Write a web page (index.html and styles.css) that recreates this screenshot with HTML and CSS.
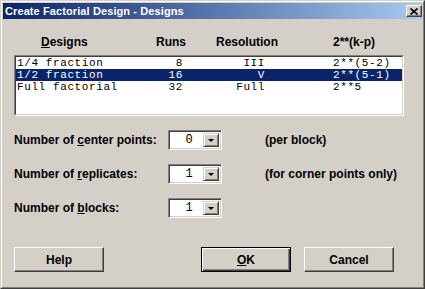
FILE: index.html
```html
<!DOCTYPE html>
<html lang="en">
<head>
    <meta charset="UTF-8">
    <title>Create Factorial Design - Designs</title>
    <link rel="stylesheet" href="styles.css">
</head>
<body>
    <div class="window">
        <div class="frame">
            <div class="titlebar">
                <span class="title">Create Factorial Design - Designs</span>
                <span class="close">
                    <svg width="8" height="7" viewBox="0 0 8 7"><path d="M0.5 0.5 L7.5 6.5 M7.5 0.5 L0.5 6.5" stroke="#000" stroke-width="1.6"/></svg>
                </span>
            </div>
            <div class="content">
                <div class="cols heads">
                    <span class="h-name"><u>D</u>esigns</span>
                    <span class="h-runs">Runs</span>
                    <span class="h-res">Resolution</span>
                    <span class="h-gen">2**(k-p)</span>
                </div>
                <div class="listbox">
                    <div class="list-inner">
                        <div class="cols row">
                            <span>1/4 fraction</span><span class="num">8</span><span class="num">III</span><span class="gen">2**(5-2)</span>
                        </div>
                        <div class="cols row selected">
                            <span>1/2 fraction</span><span class="num">16</span><span class="num">V</span><span class="gen">2**(5-1)</span>
                        </div>
                        <div class="cols row">
                            <span>Full factorial</span><span class="num">32</span><span class="num">Full</span><span class="gen">2**5</span>
                        </div>
                    </div>
                </div>

                <div class="field">
                    <span class="label">Number of <u>c</u>enter points:</span>
                    <div class="combo"><span class="value">0</span><span class="drop"></span></div>
                    <span class="note">(per block)</span>
                </div>
                <div class="field">
                    <span class="label">Number of <u>r</u>eplicates:</span>
                    <div class="combo"><span class="value">1</span><span class="drop"></span></div>
                    <span class="note">(for corner points only)</span>
                </div>
                <div class="field">
                    <span class="label">Number of <u>b</u>locks:</span>
                    <div class="combo"><span class="value">1</span><span class="drop"></span></div>
                </div>

                <div class="buttons">
                    <button class="btn">Help</button>
                    <span class="spacer"></span>
                    <button class="btn default"><u>O</u>K</button>
                    <button class="btn">Cancel</button>
                </div>
            </div>
        </div>
    </div>
</body>
</html>
```

FILE: styles.css
```css
body {
    margin: 0;
    background: #d4d0c8;
    font-family: "Liberation Sans", Arial, sans-serif;
    font-weight: bold;
    font-size: 12px;
    color: #000;
}

.window {
    width: 425px;
    height: 289px;
    box-sizing: border-box;
    border: 1px solid;
    border-color: #d4d0c8 #404040 #404040 #d4d0c8;
}

.frame {
    height: 100%;
    box-sizing: border-box;
    border: 1px solid;
    border-color: #fff #808080 #808080 #fff;
    padding: 1px;
    display: flex;
    flex-direction: column;
}

.titlebar {
    height: 16px;
    background: linear-gradient(to right, #0a246a, #a6caf0);
    display: flex;
    align-items: center;
    justify-content: space-between;
    padding-left: 2px;
}

.title {
    color: #fff;
    font-size: 11px;
    font-family: "Liberation Sans", Arial, sans-serif;
    letter-spacing: 0.1px;
}

.close {
    width: 16px;
    height: 12px;
    box-sizing: border-box;
    background: #d4d0c8;
    border: 1px solid;
    border-color: #fff #404040 #404040 #fff;
    box-shadow: inset -1px -1px 0 #808080;
    display: flex;
    align-items: center;
    justify-content: center;
}

.close svg {
    display: block;
}

.content {
    padding: 16px 18px 14px 11px;
    display: flex;
    flex-direction: column;
}

.cols {
    display: grid;
    grid-template-columns: 139px 27px 82px 1fr;
}

.heads {
    line-height: 14px;
    padding-left: 3px;
}

.h-name {
    padding-left: 24px;
}

.h-runs {
    text-align: right;
}

.h-res {
    padding-left: 33px;
}

.h-gen {
    padding-left: 68px;
}

.listbox {
    margin-top: 6px;
    height: 61px;
    box-sizing: border-box;
    border: 1px solid;
    border-color: #808080 #fff #fff #808080;
}

.list-inner {
    height: 100%;
    box-sizing: border-box;
    border: 1px solid;
    border-color: #404040 #d4d0c8 #d4d0c8 #404040;
    background: #fff;
}

.row {
    font-family: "Liberation Mono", "Courier New", monospace;
    font-weight: normal;
    font-size: 11px;
    letter-spacing: 0.6px;
    line-height: 12px;
    padding-left: 1px;
    height: 12px;
}

.row .num {
    text-align: right;
}

.row .gen {
    padding-left: 68px;
}

.selected {
    background: #0a246a;
    color: #fff;
}

.field {
    display: flex;
    align-items: center;
    height: 20px;
    margin-top: 14px;
}

.field .label {
    width: 154px;
}

.combo {
    width: 54px;
    height: 20px;
    box-sizing: border-box;
    border: 1px solid;
    border-color: #808080 #fff #fff #808080;
    box-shadow: inset 1px 1px 0 #404040, inset -1px -1px 0 #d4d0c8;
    background: #fff;
    display: flex;
    padding: 2px;
}

.combo .value {
    flex: 1;
    font-family: "Liberation Mono", "Courier New", monospace;
    font-weight: normal;
    font-size: 12px;
    line-height: 14px;
    text-align: center;
    padding-left: 4px;
}

.drop {
    width: 16px;
    box-sizing: border-box;
    background: #d4d0c8;
    border: 1px solid;
    border-color: #d4d0c8 #404040 #404040 #d4d0c8;
    box-shadow: inset 1px 1px 0 #fff, inset -1px -1px 0 #808080;
    position: relative;
}

.drop::after {
    content: "";
    position: absolute;
    left: 4px;
    top: 5px;
    border-left: 3px solid transparent;
    border-right: 3px solid transparent;
    border-top: 3px solid #000;
}

.note {
    margin-left: 43px;
}

.buttons {
    display: flex;
    margin-top: 29px;
    gap: 13px;
    padding-right: 10px;
}

.spacer {
    flex: 1;
}

.btn {
    width: 90px;
    height: 25px;
    box-sizing: border-box;
    background: #d4d0c8;
    border: 1px solid;
    border-color: #fff #404040 #404040 #fff;
    box-shadow: inset -1px -1px 0 #808080;
    font-family: "Liberation Sans", Arial, sans-serif;
    font-weight: bold;
    font-size: 12px;
    color: #000;
    padding: 0;
}

.btn.default {
    border: 1px solid #000;
    box-shadow: inset 1px 1px 0 #fff, inset -1px -1px 0 #404040, inset -2px -2px 0 #808080;
}
```
